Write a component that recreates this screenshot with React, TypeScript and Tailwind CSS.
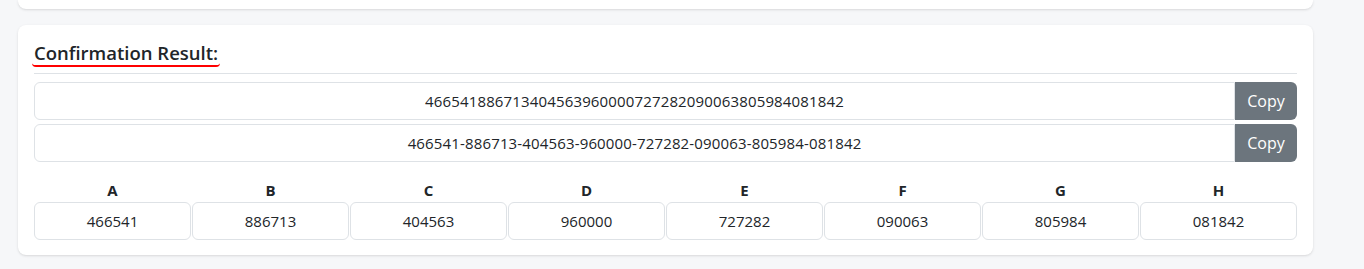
const parts = ['466541', '886713', '404563', '960000', '727282', '090063', '805984', '081842'];
const letters = ['A', 'B', 'C', 'D', 'E', 'F', 'G', 'H'];

function CopyField({ value }: { value: string }) {
  return (
    <div className="flex h-[38px]">
      <div className="flex-1 flex items-center justify-center border border-[#dee2e6] rounded-l-md text-[15px] tracking-[0.01em] text-[#212529]">
        {value}
      </div>
      <button className="w-[62px] bg-[#6c757d] text-white text-base rounded-r-md">Copy</button>
    </div>
  );
}

export default function App() {
  return (
    <div className="min-h-[269px] bg-[#f6f7f9] pl-[18px]" style={{ fontFamily: "'Open Sans', 'Noto Sans', sans-serif" }}>
      <div className="w-[1295px] h-[9px] bg-white rounded-b-lg shadow-sm" />
      <div className="w-[1295px] mt-4 bg-white rounded-lg shadow-sm px-4 pt-4 pb-[15px]">
        <h2 className="inline-block px-0.5 -ml-0.5 border-b-2 border-[#ff0000] rounded-sm text-[18.5px] leading-6 font-semibold text-[#212529]">
          Confirmation Result:
        </h2>
        <hr className="mt-1.5 mb-2 border-t border-[#dee2e6]" />
        <div className="flex flex-col gap-1">
          <CopyField value={parts.join('')} />
          <CopyField value={parts.join('-')} />
        </div>
        <div className="grid grid-cols-8 gap-px mt-4">
          {letters.map((l, i) => (
            <div key={l} className="flex flex-col">
              <div className="h-6 flex items-center justify-center text-[15px] font-bold text-[#212529]">{l}</div>
              <div className="h-[38px] flex items-center justify-center border border-[#dee2e6] rounded-md text-[15px] text-[#212529]">
                {parts[i]}
              </div>
            </div>
          ))}
        </div>
      </div>
    </div>
  );
}
